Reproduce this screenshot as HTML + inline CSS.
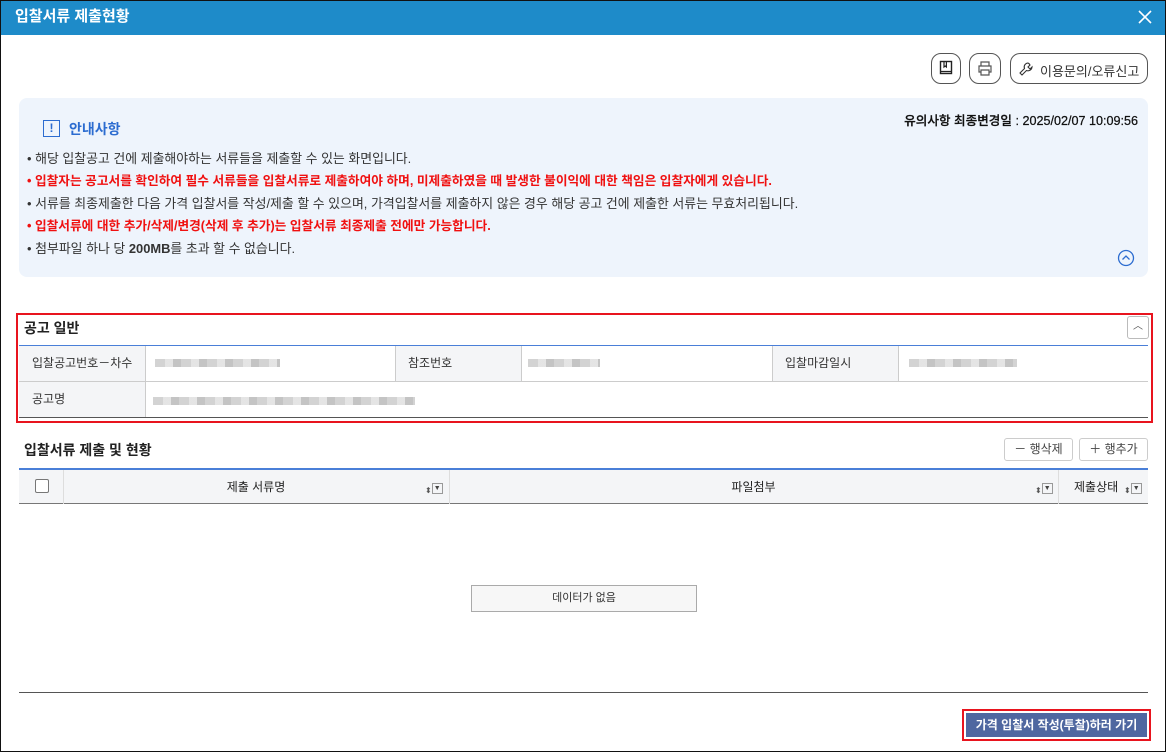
<!DOCTYPE html>
<html><head><meta charset="utf-8"><style>
*{box-sizing:border-box;margin:0;padding:0}
body{width:1166px;height:752px;font-family:"Liberation Sans","Noto Sans CJK KR",sans-serif;background:#fff;position:relative;overflow:hidden;color:#222}
.a{position:absolute}
.win{left:0;top:0;width:1166px;height:752px;border:1px solid #111}
.hd{left:1px;top:1px;width:1164px;height:34px;background:#1e8bc9;color:#fff;font-weight:bold;font-size:15px;line-height:32px;padding-left:14px}
.rb{border:1px solid #555;border-radius:10px;background:#fff}
.info{left:19px;top:98px;width:1129px;height:179px;background:#eef4fc;border-radius:8px}
.li{left:27px;font-size:12.9px;color:#333}
.red{color:#f01010;font-weight:bold}
.lab{background:#f4f5f7;font-size:12px;color:#333;padding-left:13px;line-height:36px}
.blur{background:repeating-linear-gradient(90deg,#c8c8c8 0 10px,#dedede 10px 18px,#b5b5b5 18px 26px);height:8px;opacity:.8}
.btn{border:1px solid #ccc;border-radius:3px;background:#fff;font-size:12px;color:#444;text-align:center;line-height:21px}
.th{font-size:12px;color:#222;line-height:34px;text-align:center}
.srt{font-size:8px;color:#555}
.dd{display:inline-block;width:11px;height:11px;border:1px solid #999;font-size:7px;line-height:9px;text-align:center;color:#444;vertical-align:middle}
</style></head><body>
<div class="a win"></div>
<div class="a hd">입찰서류 제출현황</div>
<svg class="a" style="left:1137px;top:9px" width="16" height="16"><path d="M2 2L14 14M14 2L2 14" stroke="#fff" stroke-width="1.6"/></svg>

<div class="a rb" style="left:931px;top:53px;width:30px;height:31px"></div>
<svg class="a" style="left:938px;top:60px" width="16" height="16"><rect x="2.5" y="1.5" width="11" height="12" fill="none" stroke="#222" stroke-width="1.4"/><path d="M2.5 11.5H13.5M6 1.5V7L7.2 6 8.4 7V1.5" fill="none" stroke="#222" stroke-width="1.2"/></svg>
<div class="a rb" style="left:969px;top:53px;width:32px;height:31px"></div>
<svg class="a" style="left:977px;top:60px" width="16" height="17"><path d="M4 6V2H12V6M4 12H2V6H14V12H12M4 10H12V15H4Z" fill="none" stroke="#555" stroke-width="1.2"/></svg>
<div class="a rb" style="left:1010px;top:53px;width:138px;height:31px"></div>
<svg class="a" style="left:1018px;top:61px" width="16" height="16"><path d="M10 2a4 4 0 0 0-3.5 5.5L2 12l2 2 4.5-4.5A4 4 0 0 0 14 6l-2 2-2-2 2-2a4 4 0 0 0-2-2z" fill="none" stroke="#333" stroke-width="1.1"/></svg>
<div class="a" style="left:1040px;top:61px;font-size:13px;color:#333">이용문의/오류신고</div>

<div class="a info"></div>
<div class="a" style="left:880px;top:110px;width:258px;text-align:right;font-size:12.6px;color:#111;font-weight:500;-webkit-text-stroke:0.25px #111">유의사항 최종변경일 : 2025/02/07 10:09:56</div>
<div class="a" style="left:43px;top:120px;width:17px;height:17px;border:1.5px solid #2c6cd0;color:#2c6cd0;font-size:12px;font-weight:bold;text-align:center;line-height:14px">!</div>
<div class="a" style="left:69px;top:119px;font-size:14px;color:#2c6cd0;font-weight:bold">안내사항</div>
<div class="a li" style="top:148px">• 해당 입찰공고 건에 제출해야하는 서류들을 제출할 수 있는 화면입니다.</div>
<div class="a li red" style="top:170px;font-size:12.7px">• 입찰자는 공고서를 확인하여 필수 서류들을 입찰서류로 제출하여야 하며, 미제출하였을 때 발생한 불이익에 대한 책임은 입찰자에게 있습니다.</div>
<div class="a li" style="top:193px">• 서류를 최종제출한 다음 가격 입찰서를 작성/제출 할 수 있으며, 가격입찰서를 제출하지 않은 경우 해당 공고 건에 제출한 서류는 무효처리됩니다.</div>
<div class="a li red" style="top:215px;font-size:12.7px">• 입찰서류에 대한 추가/삭제/변경(삭제 후 추가)는 입찰서류 최종제출 전에만 가능합니다.</div>
<div class="a li" style="top:238px">• 첨부파일 하나 당 <b>200MB</b>를 초과 할 수 없습니다.</div>
<svg class="a" style="left:1117px;top:249px" width="18" height="18"><circle cx="9" cy="9" r="7.5" fill="none" stroke="#2c6cd0" stroke-width="1.3"/><path d="M5.5 10.5L9 7 12.5 10.5" fill="none" stroke="#2c6cd0" stroke-width="1.3"/></svg>

<div class="a" style="left:16px;top:313px;width:1137px;height:110px;border:2px solid #e8141e"></div>
<div class="a" style="left:24px;top:318px;font-size:14px;font-weight:bold">공고 일반</div>
<div class="a" style="left:1127px;top:316px;width:22px;height:23px;border:1px solid #bbb;border-radius:3px;font-size:10px;text-align:center;line-height:20px;color:#555">︿</div>
<div class="a" style="left:19px;top:345px;width:1129px;height:1px;background:#4a7fd8"></div>
<div class="a lab" style="left:19px;top:346px;width:126px;height:35px;line-height:35px">입찰공고번호－차수</div>
<div class="a lab" style="left:395px;top:346px;width:126px;height:35px;line-height:35px">참조번호</div>
<div class="a lab" style="left:772px;top:346px;width:126px;height:35px;line-height:35px">입찰마감일시</div>
<div class="a lab" style="left:19px;top:382px;width:126px;height:35px;line-height:35px">공고명</div>
<div class="a" style="left:145px;top:346px;width:1px;height:71px;background:#ccc"></div>
<div class="a" style="left:395px;top:346px;width:1px;height:35px;background:#ccc"></div>
<div class="a" style="left:521px;top:346px;width:1px;height:35px;background:#ccc"></div>
<div class="a" style="left:772px;top:346px;width:1px;height:35px;background:#ccc"></div>
<div class="a" style="left:898px;top:346px;width:1px;height:35px;background:#ccc"></div>
<div class="a" style="left:19px;top:381px;width:1129px;height:1px;background:#ccc"></div>
<div class="a" style="left:19px;top:417px;width:1129px;height:1px;background:#555"></div>
<div class="a blur" style="left:155px;top:359px;width:125px"></div>
<div class="a blur" style="left:528px;top:359px;width:72px"></div>
<div class="a blur" style="left:909px;top:359px;width:108px"></div>
<div class="a blur" style="left:153px;top:397px;width:262px"></div>

<div class="a" style="left:24px;top:440px;font-size:14px;font-weight:bold">입찰서류 제출 및 현황</div>
<div class="a btn" style="left:1004px;top:438px;width:69px;height:23px">－ 행삭제</div>
<div class="a btn" style="left:1079px;top:438px;width:69px;height:23px">＋ 행추가</div>
<div class="a" style="left:19px;top:468px;width:1129px;height:36px;background:#f4f5f7;border-top:2px solid #4a7fd8;border-bottom:1px solid #777"></div>
<div class="a" style="left:35px;top:479px;width:14px;height:14px;border:1px solid #777;border-radius:2px;background:#fff"></div>
<div class="a" style="left:63px;top:470px;width:1px;height:34px;background:#ddd"></div>
<div class="a" style="left:449px;top:470px;width:1px;height:34px;background:#ddd"></div>
<div class="a" style="left:1058px;top:470px;width:1px;height:34px;background:#ddd"></div>
<div class="a th" style="left:63px;top:470px;width:386px">제출 서류명</div>
<div class="a th" style="left:449px;top:470px;width:609px">파일첨부</div>
<div class="a" style="left:1074px;top:470px;font-size:12px;line-height:34px">제출상태</div>
<div class="a" style="left:425px;top:480px"><span class="srt">⬍</span><span class="dd">▼</span></div>
<div class="a" style="left:1035px;top:480px"><span class="srt">⬍</span><span class="dd">▼</span></div>
<div class="a" style="left:1124px;top:480px"><span class="srt">⬍</span><span class="dd">▼</span></div>
<div class="a" style="left:471px;top:585px;width:226px;height:27px;border:1px solid #aaa;background:#f7f7f7;font-size:11px;text-align:center;line-height:25px;color:#333">데이터가 없음</div>
<div class="a" style="left:19px;top:692px;width:1129px;height:1px;background:#555"></div>
<div class="a" style="left:962px;top:709px;width:189px;height:32px;border:2px solid #e8141e;padding:2px"><div style="background:#4f67a0;color:#fff;font-weight:bold;font-size:12px;text-align:center;line-height:24px;height:24px">가격 입찰서 작성(투찰)하러 가기</div></div>
</body></html>
